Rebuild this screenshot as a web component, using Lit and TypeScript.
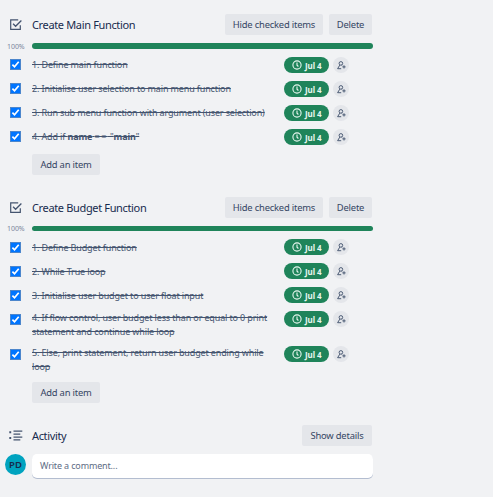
import { LitElement, html, css, svg, TemplateResult } from 'lit';
import { customElement, property } from 'lit/decorators.js';

interface Item { text: string | TemplateResult; tall?: boolean; }

const mainItems: Item[] = [
  { text: '1. Define main function' },
  { text: '2. Initialise user selection to main menu function' },
  { text: '3. Run sub menu function with argument (user selection)' },
  { text: html`4. Add if <b>name</b> <span class="op">==</span> "<b>main</b>"` },
];
const budgetItems: Item[] = [
  { text: '1. Define Budget function' },
  { text: '2. While True loop' },
  { text: '3. Initialise user budget to user float input' },
  { text: html`4. If flow control, user budget less than or equal to 0 print<br>statement and continue while loop`, tall: true },
  { text: html`5. Else, print statement, return user budget ending while<br>loop`, tall: true },
];

const clock = svg`<circle cx="5" cy="5" r="4.1"/><path d="M5 2.5V5.2L6.4 6.5"/>`;
const person = svg`<circle cx="4.9" cy="2.4" r="1.8"/><path d="M3.8 4.1L1.6 7.7H5.2M5.6 4.2L6.2 4.7M8 4.3V7.5M6.4 5.9H9.6"/>`;

const shared = css`
  * { box-sizing: border-box; }
  .head { display: flex; align-items: center; height: 21px; padding-left: 9px; }
  .head svg { flex: none; width: 14px; height: 14px; margin-right: 9px; fill: none; stroke: #44546f; }
  h3 { margin: 0; flex: 1; font-size: 11px; line-height: 21px; font-weight: 400; color: #172b4d; white-space: nowrap; letter-spacing: -0.35px; }
  button { display: block; height: 21px; margin: 0; padding: 0; text-align: center; border: 0; border-radius: 2px; background: #e4e6ea;
    color: #344563; font: 400 9.4px/21px "Noto Sans", sans-serif; letter-spacing: -0.19px; white-space: nowrap; }
`;

@customElement('check-list')
export class CheckList extends LitElement {
  @property() heading = '';
  @property({ attribute: false }) items: Item[] = [];
  static styles = [shared, css`
    :host { display: block; --bar: 6px; --drop: 0px; }
    :host([slim]) { --bar: 5px; --drop: 1px; }
    .actions { display: flex; gap: 6px; }
    .hide { width: 98px; }
    .delete { width: 43px; }
    .progress { display: flex; align-items: center; height: var(--bar); margin: 8px 0 3px; }
    .percent { flex: none; width: 32px; padding-left: 7px; font-size: 7px; line-height: 8px; color: #7b879c; letter-spacing: -0.05px; padding-top: 1px; }
    .track { flex: none; width: 341px; height: var(--bar); border-radius: 3px; background: #1f845a; }
    .row { display: flex; align-items: flex-start; height: 24px; padding: 5px 0 0 10px; }
    .row.tall { height: 35px; }
    .row.tall .text { margin-top: 0; line-height: 13.5px; }
    .box { width: 11px; height: 11px; flex: none; margin: calc(2px + var(--drop)) 11px 0 0; background: #0075ff; border: 1px solid #4c86cc; display: block; }
    .box path { fill: none; stroke: #fff; stroke-width: 1.7; }
    .text { flex: none; width: 252px; font-size: 9px; line-height: 13px; margin-top: calc(1px + var(--drop)); letter-spacing: -0.137px; color: #44546f; text-decoration: line-through; white-space: nowrap; }
    .op { letter-spacing: 1.5px; }
    .due { display: flex; align-items: center; width: 45px; height: 16px; border-radius: 8px; padding-left: 8px; gap: 3px;
      color: #e8f7ef; background: #1f845a; font: 700 8px/16px "Noto Sans", sans-serif; letter-spacing: -0.1px; white-space: nowrap; }
    .due span { padding-top: 1px; }
    .due svg { width: 10px; height: 10px; fill: none; stroke: #e8f7ef; stroke-width: 1.1; }
    .member { display: flex; align-items: center; justify-content: center; width: 16px; height: 16px; margin-left: 4px; border-radius: 50%; background: #e4e6ea; }
    .member svg { width: 10px; height: 9px; fill: none; stroke: #44546f; stroke-width: 0.95; }
    .add { width: 68px; margin: 6px 0 0 32px; }
  `];
  render() {
    return html`
      <div class="head">
        <svg viewBox="0 0 14 14"><path d="M11.3 7.2V11.4H1.7V1.9H9.2" stroke-width="1.2"/><path d="M4.1 5.8L6.6 8.3L12.4 2.5" stroke-width="1.3"/></svg>
        <h3>${this.heading}</h3>
        <div class="actions"><button class="hide">Hide checked items</button><button class="delete">Delete</button></div>
      </div>
      <div class="progress"><span class="percent">100%</span><div class="track"></div></div>
      ${this.items.map(i => html`<div class="row ${i.tall ? 'tall' : ''}">
        <svg class="box" viewBox="0 0 9 9"><path d="M1.4 4.7L3.5 6.8L7.7 1.8"/></svg>
        <div class="text">${i.text}</div>
        <div class="due"><svg viewBox="0 0 10 10">${clock}</svg><span>Jul 4</span></div>
        <div class="member"><svg viewBox="0 0 10 9">${person}</svg></div>
      </div>`)}
      <button class="add">Add an item</button>`;
  }
}

@customElement('app-root')
export class AppRoot extends LitElement {
  static styles = [shared, css`
    :host { display: block; width: 493px; height: 497px; overflow: hidden; background: #f1f2f4; font-family: "Noto Sans", sans-serif; }
    .panel { width: 372px; padding-top: 14px; }
    check-list { margin-bottom: 22px; }
    .show { width: 70px; }
    .comment { display: flex; width: 373px; margin-top: 8px; padding-left: 5px; gap: 6px; }
    .avatar { width: 21px; height: 21px; border-radius: 50%; background: #00a3bf; color: #172b4d; text-align: center; font-weight: 600; font-size: 9.5px; line-height: 21px; }
    .field { flex: 1; height: 24px; padding-left: 8px; border-radius: 5px; background: #fff; box-shadow: 0 1px 0 #b3bdd0; color: #5e6c84; font-size: 9px; line-height: 24px; letter-spacing: -0.15px; }
  `];
  render() {
    return html`<div class="panel">
      <check-list heading="Create Main Function" .items=${mainItems}></check-list>
      <check-list slim heading="Create Budget Function" .items=${budgetItems}></check-list>
      <div class="head">
        <svg viewBox="0 0 14 14"><path d="M4.5 2.2H13.3M4.5 5.2H11.3M4.5 8.1H13.3M4.5 10.9H11.3" stroke-width="1.2"/><path d="M.3 3.2H2.2M.3 9H2.2" stroke-width="1.9"/></svg>
        <h3>Activity</h3><button class="show">Show details</button>
      </div>
      <div class="comment"><div class="avatar">PD</div><div class="field">Write a comment...</div></div>
    </div>`;
  }
}
